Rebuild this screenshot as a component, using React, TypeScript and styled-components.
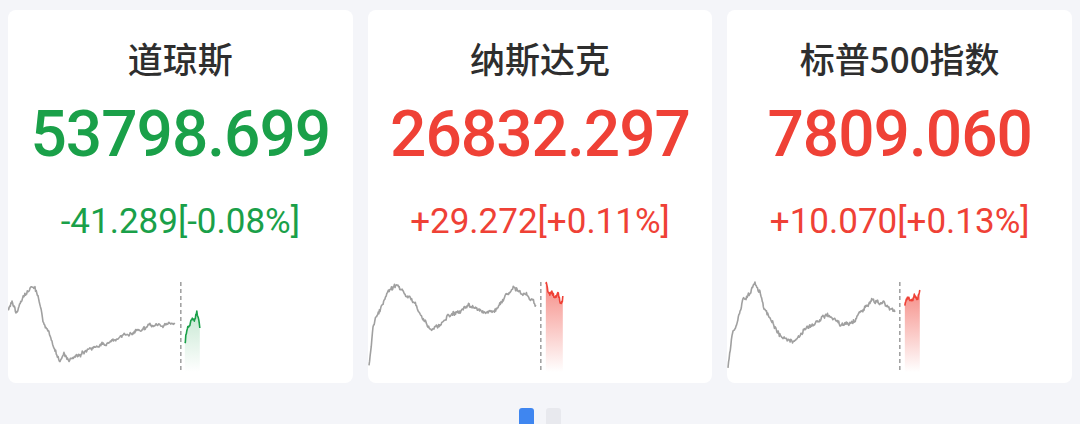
import React from 'react'
import styled, { createGlobalStyle } from 'styled-components'

const GlobalStyle = createGlobalStyle`
  html, body {
    margin: 0;
    padding: 0;
    background: #f4f5f9;
  }
  body {
    font-family: Roboto, "Noto Sans CJK SC", sans-serif;
  }
`

const UP = '#ef4136'
const DOWN = '#1aa049'

type Pt = [number, number]

interface IndexData {
  name: string
  price: string
  change: string
  up: boolean
  seed: number
  prev: Pt[]
  today: Pt[]
}

// chart coords: x from card left, y from chart top (chart is 92px tall)
const indices: IndexData[] = [
  {
    name: '道琼斯',
    price: '53798.699',
    change: '-41.289[-0.08%]',
    up: false,
    seed: 7,
    prev: [[0, 30], [4, 22], [8, 34], [14, 20], [24, 4], [30, 14], [35, 40], [44, 62], [52, 82], [56, 72], [60, 80], [69, 75], [85, 68], [102, 62], [118, 54], [135, 50], [145, 44], [152, 46], [160, 42], [167, 43]],
    today: [[177, 65], [179, 50], [182, 44], [185, 40], [187, 42], [189, 33], [192, 48]],
  },
  {
    name: '纳斯达克',
    price: '26832.297',
    change: '+29.272[+0.11%]',
    up: true,
    seed: 19,
    prev: [[1, 87], [5, 48], [8, 38], [12, 30], [20, 12], [30, 4], [36, 12], [40, 18], [48, 24], [56, 40], [63, 50], [72, 44], [80, 37], [90, 32], [100, 26], [113, 30], [126, 32], [136, 18], [146, 7], [158, 15], [168, 25]],
    today: [[178, 3], [181, 14], [184, 10], [187, 18], [190, 12], [193, 22], [195, 16]],
  },
  {
    name: '标普500指数',
    price: '7809.060',
    change: '+10.070[+0.13%]',
    up: true,
    seed: 33,
    prev: [[1, 87], [5, 55], [9, 45], [16, 20], [22, 14], [28, 3], [33, 12], [37, 28], [45, 42], [53, 56], [62, 60], [68, 62], [80, 46], [90, 42], [100, 35], [113, 43], [126, 42], [136, 28], [146, 20], [158, 24], [168, 32]],
    today: [[178, 24], [181, 16], [184, 20], [187, 15], [190, 18], [193, 10]],
  },
]

function rng(seed: number) {
  let a = seed
  return () => {
    a |= 0
    a = (a + 0x6d2b79f5) | 0
    let t = Math.imul(a ^ (a >>> 15), 1 | a)
    t = (t + Math.imul(t ^ (t >>> 7), 61 | t)) ^ t
    return ((t ^ (t >>> 14)) >>> 0) / 4294967296
  }
}

function jagged(points: Pt[], seed: number, amp: number, step = 0.7): Pt[] {
  const rand = rng(seed)
  const out: Pt[] = []
  let drift = 0
  for (let i = 0; i < points.length - 1; i++) {
    const [x0, y0] = points[i]
    const [x1, y1] = points[i + 1]
    const n = Math.max(1, Math.round((x1 - x0) / step))
    for (let k = 0; k < n; k++) {
      const t = k / n
      const x = x0 + (x1 - x0) * t
      drift = drift * 0.7 + (rand() - 0.5) * amp
      const y = y0 + (y1 - y0) * t + drift + (rand() - 0.5) * amp
      out.push([x, y])
    }
  }
  out.push(points[points.length - 1])
  return out
}

const toPath = (pts: Pt[]) =>
  pts.map(([x, y], i) => `${i ? 'L' : 'M'}${x.toFixed(1)} ${y.toFixed(1)}`).join(' ')

const Page = styled.div`
  height: 424px;
  overflow: hidden;
  padding: 10px 8px 0;
  box-sizing: border-box;
  background: #f4f5f9;
`

const CardRow = styled.div`
  display: flex;
  gap: 15px;
`

const Card = styled.div`
  flex: 1;
  height: 373px;
  background: #ffffff;
  border-radius: 8px;
  display: flex;
  flex-direction: column;
  align-items: center;
  overflow: hidden;
`

const Title = styled.div`
  margin-top: 28px;
  font-family: "Noto Sans CJK SC", Roboto, sans-serif;
  font-size: 35px;
  line-height: 40px;
  font-weight: 500;
  color: #2e2e2e;
`

const Price = styled.div<{ $up: boolean }>`
  margin-top: 22px;
  font-family: Roboto, sans-serif;
  font-size: 64px;
  line-height: 70px;
  font-weight: 500;
  letter-spacing: -1px;
  color: ${({ $up }) => ($up ? UP : DOWN)};
`

const Change = styled.div<{ $up: boolean }>`
  margin-top: 32px;
  font-family: Roboto, sans-serif;
  font-size: 35px;
  line-height: 40px;
  color: ${({ $up }) => ($up ? UP : DOWN)};
`

const Chart = styled.svg`
  display: block;
  margin-top: 38px;
  width: 100%;
  height: 92px;
  align-self: stretch;
`

const Dots = styled.div`
  display: flex;
  justify-content: center;
  gap: 12px;
  margin-top: 25px;
`

const Dot = styled.div<{ $active?: boolean }>`
  width: 15px;
  height: 20px;
  border-radius: 3px;
  background: ${({ $active }) => ($active ? '#3f86f0' : '#e8e9ee')};
`

function Spark({ data }: { data: IndexData }) {
  const color = data.up ? UP : DOWN
  const prev = jagged(data.prev, data.seed, 2.6, 0.6)
  const today = jagged(data.today, data.seed + 5, 3, 0.5)
  const first = today[0][0]
  const last = today[today.length - 1][0]
  const area = `${toPath(today)} L${last} 92 L${first} 92 Z`
  const gid = `fill-${data.seed}`
  return (
    <Chart viewBox="0 0 345 92" preserveAspectRatio="none">
      <defs>
        <linearGradient id={gid} x1="0" y1="0" x2="0" y2="1">
          <stop offset="0" stopColor={color} stopOpacity={data.up ? 0.6 : 0.25} />
          <stop offset="1" stopColor={color} stopOpacity="0" />
        </linearGradient>
      </defs>
      <path d={toPath(prev)} fill="none" stroke="#a0a0a0" strokeWidth="1.6" strokeLinejoin="round" />
      <line x1="173" y1="2" x2="173" y2="92" stroke="#8e8e8e" strokeWidth="1.3" strokeDasharray="4 3" />
      <path d={area} fill={`url(#${gid})`} />
      <path d={toPath(today)} fill="none" stroke={color} strokeWidth="1.6" strokeLinejoin="round" />
    </Chart>
  )
}

export default function App() {
  return (
    <>
      <GlobalStyle />
      <Page>
        <CardRow>
          {indices.map((d) => (
            <Card key={d.name}>
              <Title>{d.name}</Title>
              <Price $up={d.up}>{d.price}</Price>
              <Change $up={d.up}>{d.change}</Change>
              <Spark data={d} />
            </Card>
          ))}
        </CardRow>
        <Dots>
          <Dot $active />
          <Dot />
        </Dots>
      </Page>
    </>
  )
}
